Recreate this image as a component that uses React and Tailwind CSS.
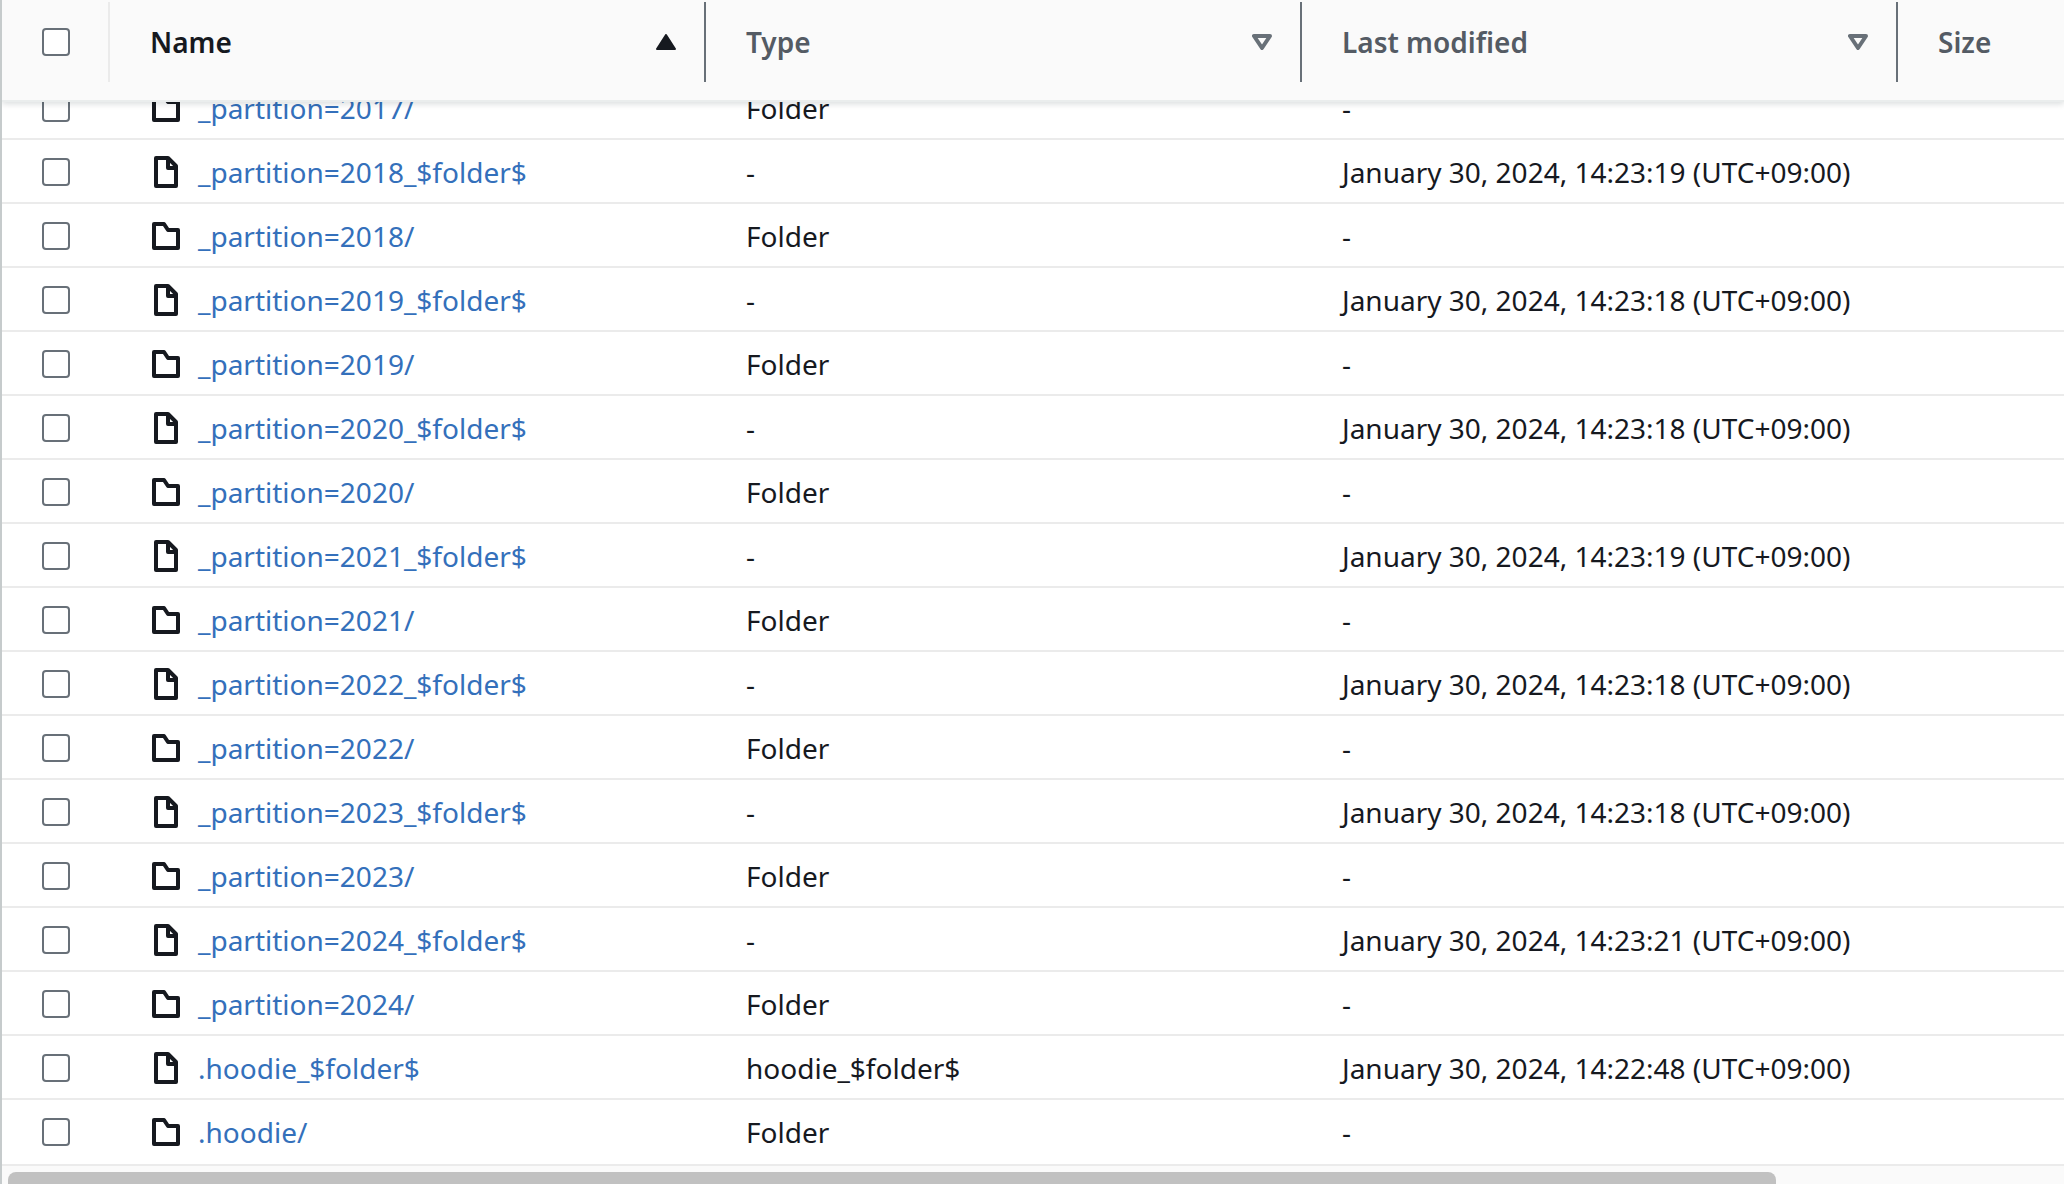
import React from "react";

const rows = [
  { name: "_partition=2017/", type: "Folder", modified: "-" },
  { name: "_partition=2018_$folder$", type: "-", modified: "January 30, 2024, 14:23:19 (UTC+09:00)" },
  { name: "_partition=2018/", type: "Folder", modified: "-" },
  { name: "_partition=2019_$folder$", type: "-", modified: "January 30, 2024, 14:23:18 (UTC+09:00)" },
  { name: "_partition=2019/", type: "Folder", modified: "-" },
  { name: "_partition=2020_$folder$", type: "-", modified: "January 30, 2024, 14:23:18 (UTC+09:00)" },
  { name: "_partition=2020/", type: "Folder", modified: "-" },
  { name: "_partition=2021_$folder$", type: "-", modified: "January 30, 2024, 14:23:19 (UTC+09:00)" },
  { name: "_partition=2021/", type: "Folder", modified: "-" },
  { name: "_partition=2022_$folder$", type: "-", modified: "January 30, 2024, 14:23:18 (UTC+09:00)" },
  { name: "_partition=2022/", type: "Folder", modified: "-" },
  { name: "_partition=2023_$folder$", type: "-", modified: "January 30, 2024, 14:23:18 (UTC+09:00)" },
  { name: "_partition=2023/", type: "Folder", modified: "-" },
  { name: "_partition=2024_$folder$", type: "-", modified: "January 30, 2024, 14:23:21 (UTC+09:00)" },
  { name: "_partition=2024/", type: "Folder", modified: "-" },
  { name: ".hoodie_$folder$", type: "hoodie_$folder$", modified: "January 30, 2024, 14:22:48 (UTC+09:00)" },
  { name: ".hoodie/", type: "Folder", modified: "-" },
];

function Checkbox({ label }) {
  return (
    <input
      type="checkbox"
      aria-label={label}
      className="block h-7 w-7 appearance-none rounded-[4px] border-2 border-[#687078] bg-white checked:bg-[#3470bb]"
    />
  );
}

function FileIcon() {
  return (
    <svg viewBox="0 0 32 32" className="h-8 w-8 shrink-0" fill="none" stroke="#16191f" strokeWidth="4" strokeLinejoin="round" aria-hidden="true">
      <path d="M6 2h12l8 8v20H6z" />
      <path d="M18 2v10h8" />
    </svg>
  );
}

function FolderIcon() {
  return (
    <svg viewBox="0 0 32 32" className="h-8 w-8 shrink-0" fill="none" stroke="#16191f" strokeWidth="4" strokeLinejoin="round" aria-hidden="true">
      <path d="M4 4h10l4 6h10v18H4z" />
    </svg>
  );
}

function SortAscIcon() {
  return (
    <svg viewBox="0 0 20 16" className="h-4 w-5 shrink-0" fill="#16191f" stroke="#16191f" strokeWidth="2" strokeLinejoin="round" aria-hidden="true">
      <path d="M10 1l9 14H1z" />
    </svg>
  );
}

function SortIcon() {
  return (
    <svg viewBox="0 0 20 16" className="h-4 w-5 shrink-0" fill="none" stroke="#687078" strokeWidth="4" strokeLinejoin="round" aria-hidden="true">
      <path d="M2 2h16l-8 12z" />
    </svg>
  );
}

function Columns() {
  return (
    <colgroup>
      <col className="w-[108px]" />
      <col className="w-[596px]" />
      <col className="w-[596px]" />
      <col className="w-[596px]" />
      <col />
    </colgroup>
  );
}

function HeaderCell({ title, sorted, sortable = true, divider = true }) {
  return (
    <th scope="col" className="p-0 pt-0.5 text-left align-top font-semibold" aria-sort={sorted ? "ascending" : undefined}>
      <div className={divider ? "h-20 border-r-2 border-[#687078]" : "h-20"}>
        <button type="button" className={sorted ? "flex h-20 w-full items-center justify-between pr-7 pl-10 text-[#16191f]" : "flex h-20 w-full items-center justify-between pr-7 pl-10 text-[#545b64]"}>
          <span>{title}</span>
          {sortable && (sorted ? <SortAscIcon /> : <SortIcon />)}
        </button>
      </div>
    </th>
  );
}

export default function App() {
  return (
    <div className="flex h-screen flex-col overflow-hidden border-l-2 border-[#c6cbcc] bg-white font-['Noto_Sans',sans-serif] text-[28px] leading-10 text-[#16191f]">
      <div className="z-10 shrink-0 border-b-2 border-[#eaeded] bg-[#fafafa] shadow-[0_2px_6px_rgba(0,28,36,0.15)]">
        <table className="h-[100px] w-full table-fixed border-separate border-spacing-0" aria-label="Column headers">
          <Columns />
          <thead>
            <tr>
              <th scope="col" className="p-0 pt-0.5 align-top">
                <div className="flex h-20 items-center border-r-2 border-[#ebebeb] pl-10">
                  <Checkbox label="Select all objects" />
                </div>
              </th>
              <HeaderCell title="Name" sorted />
              <HeaderCell title="Type" />
              <HeaderCell title="Last modified" />
              <HeaderCell title="Size" sortable={false} divider={false} />
            </tr>
          </thead>
        </table>
      </div>

      <table className="-mt-[26px] w-full shrink-0 table-fixed border-separate border-spacing-0 border-b-2 border-[#ebebeb]" aria-label="Objects">
        <Columns />
        <tbody>
          {rows.map((row) => (
            <tr key={row.name} className="group h-16">
              <td className="border-b-2 border-[#ebebeb] p-0 pt-0.5 pl-10 group-last:border-transparent">
                <Checkbox label={`Select ${row.name}`} />
              </td>
              <td className="border-b-2 border-[#ebebeb] p-0 pt-0.5 pl-10 group-last:border-transparent">
                <div className="flex items-center gap-4 whitespace-nowrap">
                  {row.name.endsWith("/") ? <FolderIcon /> : <FileIcon />}
                  <a href="#" className="text-[#3470bb]">{row.name}</a>
                </div>
              </td>
              <td className="border-b-2 border-[#ebebeb] p-0 pt-0.5 pl-10 whitespace-nowrap group-last:border-transparent">{row.type}</td>
              <td className="border-b-2 border-[#ebebeb] p-0 pt-0.5 pl-10 whitespace-nowrap group-last:border-transparent">{row.modified}</td>
              <td className="border-b-2 border-[#ebebeb] p-0 group-last:border-transparent" />
            </tr>
          ))}
        </tbody>
      </table>

      <div className="flex-1 bg-[#fafafa] pt-1.5 pl-1.5">
        <div className="h-full w-[86%] rounded-t-lg bg-[#c1c1c1]" />
      </div>
    </div>
  );
}
